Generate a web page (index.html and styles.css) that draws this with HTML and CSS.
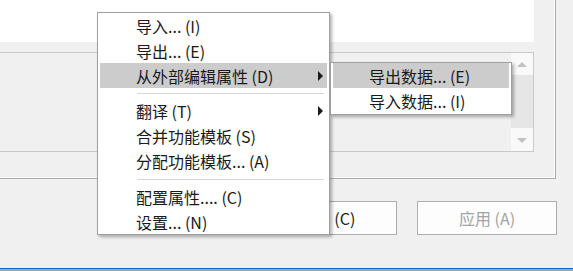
FILE: index.html
```html
<!DOCTYPE html>
<html lang="zh-CN">
<head>
<meta charset="utf-8">
<title>菜单</title>
<link rel="stylesheet" href="styles.css">
</head>
<body>
<div class="window">
  <div class="frame">
    <div class="panel"></div>
    <div class="listbox">
      <div class="scrollbar">
        <div class="sb-btn"><span class="tri-up"></span></div>
        <div class="sb-thumb"></div>
        <div class="sb-track"></div>
        <div class="sb-btn"><span class="tri-down"></span></div>
      </div>
    </div>
  </div>
  <div class="buttons">
    <div class="btn">取消 (C)</div>
    <div class="btn disabled">应用 (A)</div>
  </div>
  <div class="statusline"></div>
</div>

<div class="menu main-menu">
  <div class="menu-item">导入... (I)</div>
  <div class="menu-item">导出... (E)</div>
  <div class="menu-item active">从外部编辑属性 (D)<span class="arrow"></span></div>
  <div class="menu-sep"></div>
  <div class="menu-item">翻译 (T)<span class="arrow"></span></div>
  <div class="menu-item">合并功能模板 (S)</div>
  <div class="menu-item">分配功能模板... (A)</div>
  <div class="menu-sep wide"></div>
  <div class="menu-item">配置属性.... (C)</div>
  <div class="menu-item">设置... (N)</div>
</div>

<div class="menu sub-menu">
  <div class="menu-item active">导出数据... (E)</div>
  <div class="menu-item">导入数据... (I)</div>
</div>
</body>
</html>
```
FILE: styles.css
```css
html, body {
  margin: 0;
  padding: 0;
}
body {
  width: 573px;
  height: 271px;
  overflow: hidden;
  position: relative;
  background: #f0f0f0;
  font-family: "Noto Sans CJK SC", "Noto Sans", sans-serif;
  color: #1a1a1a;
}
.window {
  display: flex;
  flex-direction: column;
  height: 271px;
}
.frame {
  width: 556px;
  height: 179px;
  box-sizing: border-box;
  border-right: 1px solid #acacac;
  border-bottom: 1px solid #acacac;
  box-shadow: inset -1px -1px 0 #ffffff;
  display: flex;
  flex-direction: column;
}
.panel {
  width: 534px;
  height: 42px;
  background: #ffffff;
}
.listbox {
  margin-top: 10px;
  width: 534px;
  height: 100px;
  box-sizing: border-box;
  border: 1px solid #c9c9c9;
  border-left: none;
  background: #f0f0f0;
  display: flex;
  justify-content: flex-end;
}
.scrollbar {
  width: 22px;
  display: flex;
  flex-direction: column;
  background: #f9f9f9;
}
.sb-btn {
  height: 22px;
  display: flex;
  align-items: center;
  justify-content: center;
}
.sb-thumb {
  height: 53px;
  background: #e6e6e6;
}
.sb-track {
  flex: 1;
}
.tri-up {
  width: 0;
  height: 0;
  border-left: 5px solid transparent;
  border-right: 5px solid transparent;
  border-bottom: 5px solid #c2c2c2;
}
.tri-down {
  width: 0;
  height: 0;
  border-left: 5px solid transparent;
  border-right: 5px solid transparent;
  border-top: 5px solid #c2c2c2;
}
.buttons {
  display: flex;
  justify-content: flex-end;
  gap: 20px;
  padding-right: 16px;
  margin-top: 22px;
}
.btn {
  width: 140px;
  height: 34px;
  box-sizing: border-box;
  border: 1px solid #adadad;
  background: #fdfdfd;
  font-size: 16px;
  display: flex;
  align-items: center;
  justify-content: center;
}
.btn.disabled {
  color: #a3a3a3;
}
.statusline {
  margin-top: auto;
  height: 2px;
  border-top: 1px solid #1466d2;
  background: #a4a4a4;
}
.menu {
  position: absolute;
  box-sizing: border-box;
  border: 1px solid #a0a0a0;
  background: #ffffff;
  box-shadow: 2px 2px 3px rgba(0, 0, 0, 0.3);
  font-size: 16px;
  color: #1a1a1a;
}
.main-menu {
  left: 97px;
  top: 12px;
  width: 233px;
}
.sub-menu {
  left: 330px;
  top: 62px;
  width: 182px;
  padding-bottom: 1px;
}
.menu-item {
  height: 25px;
  margin: 0 2px;
  padding-left: 36px;
  display: flex;
  align-items: center;
  white-space: nowrap;
}
.menu-item.active {
  background: #cccccc;
}
.arrow {
  margin-left: auto;
  margin-right: 4px;
  width: 0;
  height: 0;
  border-top: 5px solid transparent;
  border-bottom: 5px solid transparent;
  border-left: 5px solid #1a1a1a;
}
.menu-sep {
  height: 1px;
  background: #d7d7d7;
  margin: 5px 5px 4px 39px;
}
.menu-sep.wide {
  margin-top: 6px;
}
```
